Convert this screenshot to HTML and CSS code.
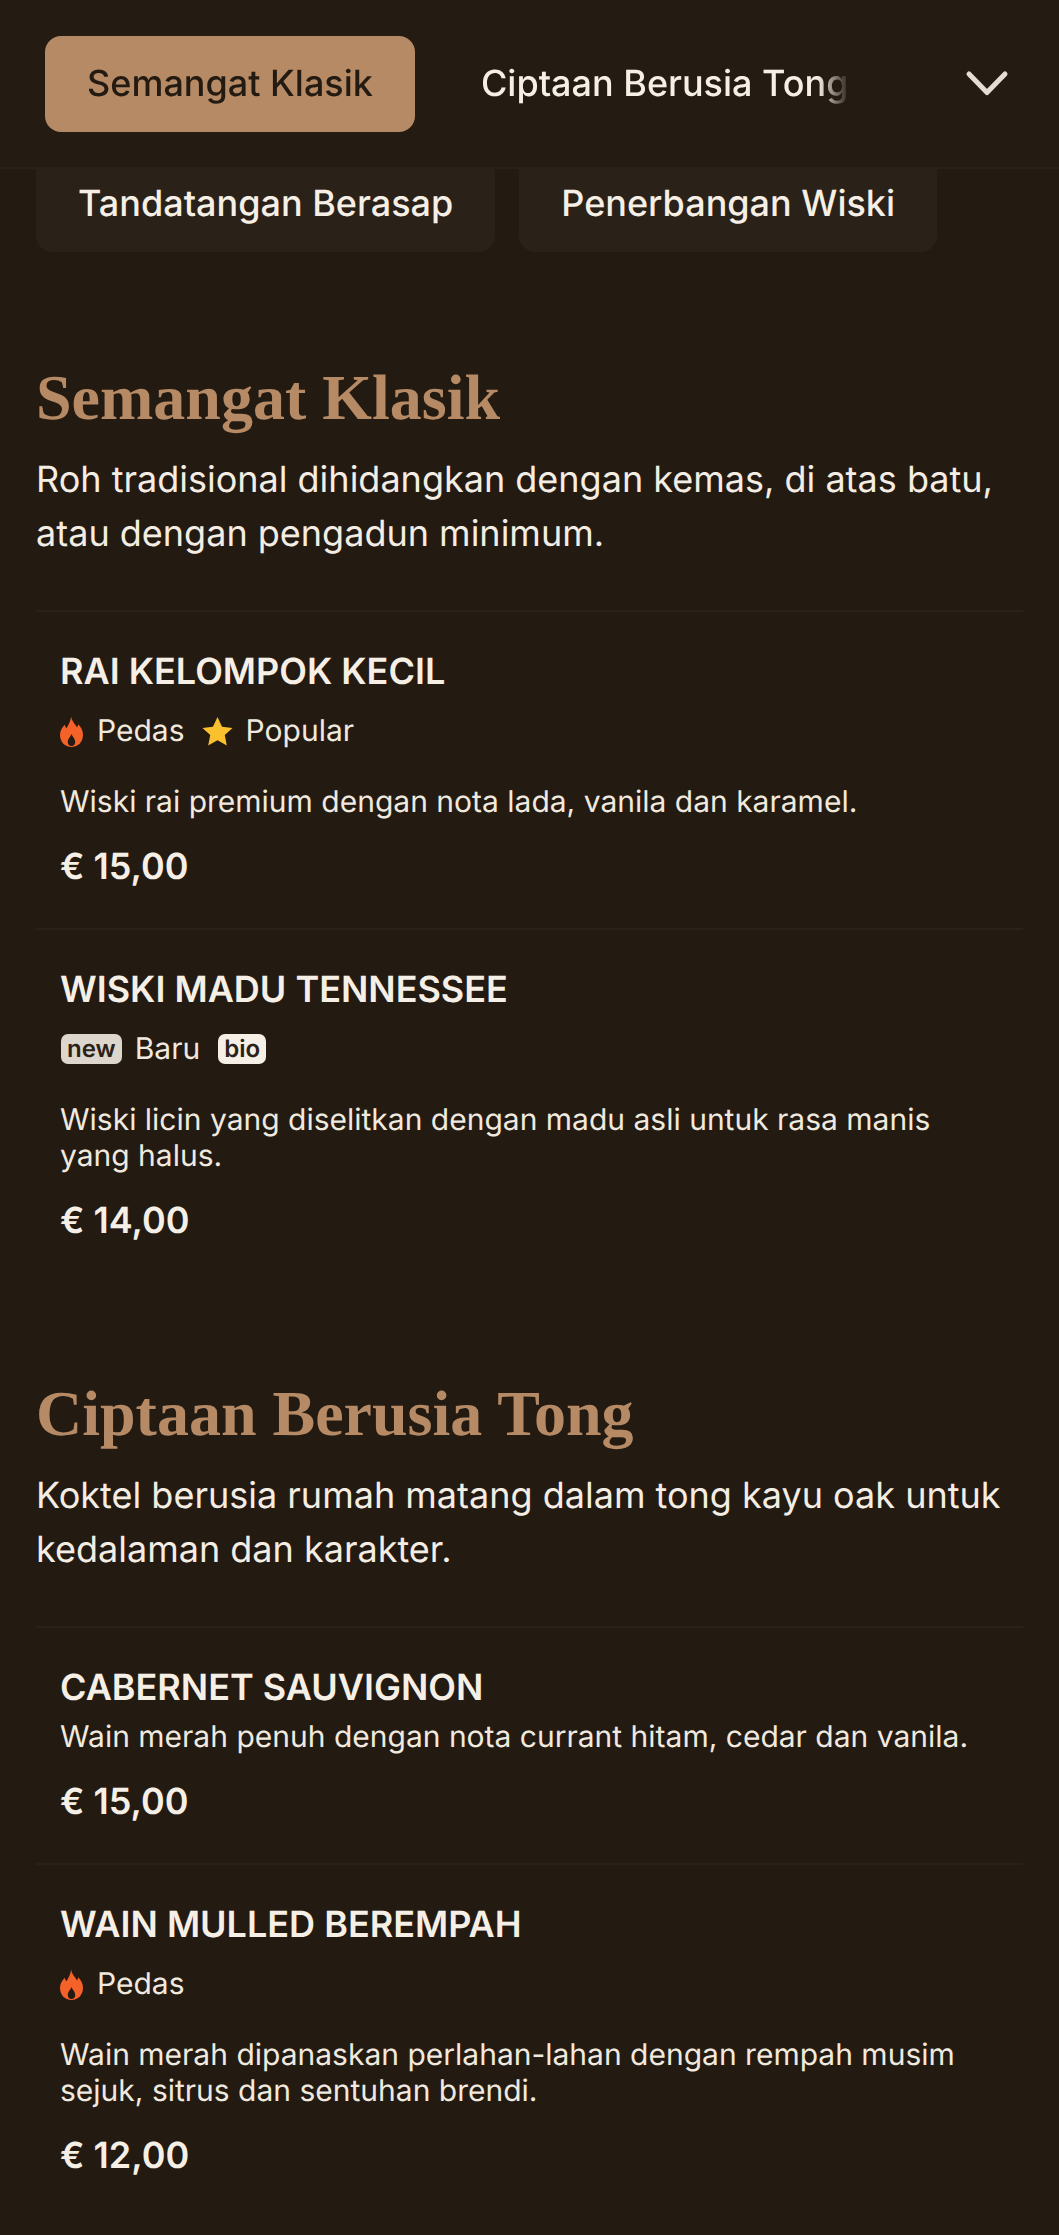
FILE: index.html
```html
<!DOCTYPE html>
<html lang="ms">
<head>
<meta charset="utf-8">
<title>Menu</title>
<link rel="stylesheet" href="styles.css">
</head>
<body>
<svg class="defs" width="0" height="0" aria-hidden="true">
  <symbol id="flame" viewBox="0 0 23 31">
    <path fill="#f4622a" fill-rule="evenodd" d="M11 0C11.500 5 15 7.500 17 11.500C17.700 10.500 18 9.500 18.200 8.200C21 11 23 14.500 23 19C23 26 18 31 11.500 31C5 31 0 26 0 19C0 14.500 2.500 11 4.700 8.700C5 10 5.600 11.200 6.500 12.300C8.500 8.500 11 5 11 0ZM11.500 18C10.500 21 7.800 22.500 7.800 26.300C7.800 28.500 9.400 30 11.500 30C13.600 30 15.200 28.500 15.200 26.300C15.200 22.500 12.500 21 11.500 18Z"/>
  </symbol>
  <symbol id="star" viewBox="0 0 32 30">
    <path fill="#fbc02d" d="M16 0.500l4.700 10 10.800 1.300-8 7.400 2.100 10.700L16 24.600 6.400 29.900l2.100-10.700-8-7.400 10.800-1.300z"/>
  </symbol>
</svg>

<nav class="topnav">
  <div class="tabs">
    <a class="tab tab-active">Semangat Klasik</a>
    <a class="tab">Ciptaan Berusia Tong</a>
  </div>
  <button class="chevron" aria-label="Lagi">
    <svg width="44" height="30" viewBox="0 0 44 30"><path d="M4 6L22 24.500L40 6" fill="none" stroke="#e4ddd3" stroke-width="5" stroke-linecap="round" stroke-linejoin="round"/></svg>
  </button>
</nav>

<div class="pills">
  <a class="pill pill-smoke">Tandatangan Berasap</a>
  <a class="pill pill-flight">Penerbangan Wiski</a>
</div>

<main>
  <section class="section">
    <h2>Semangat Klasik</h2>
    <p class="intro">Roh tradisional dihidangkan dengan kemas, di atas batu, atau dengan pengadun minimum.</p>
    <article class="item">
      <h3>RAI KELOMPOK KECIL</h3>
      <div class="tags">
        <span class="tag"><svg class="ico-flame"><use href="#flame"/></svg>Pedas</span>
        <span class="tag"><svg class="ico-star"><use href="#star"/></svg>Popular</span>
      </div>
      <p class="desc">Wiski rai premium dengan nota lada, vanila dan karamel.</p>
      <div class="price">€ 15,00</div>
    </article>
    <article class="item">
      <h3>WISKI MADU TENNESSEE</h3>
      <div class="tags">
        <span class="tag"><span class="badge badge-new">new</span>Baru</span>
        <span class="tag"><span class="badge badge-bio">bio</span></span>
      </div>
      <p class="desc">Wiski licin yang diselitkan dengan madu asli untuk rasa manis yang halus.</p>
      <div class="price">€ 14,00</div>
    </article>
  </section>

  <section class="section">
    <h2>Ciptaan Berusia Tong</h2>
    <p class="intro">Koktel berusia rumah matang dalam tong kayu oak untuk kedalaman dan karakter.</p>
    <article class="item">
      <h3>CABERNET SAUVIGNON</h3>
      <p class="desc desc-tight">Wain merah penuh dengan nota currant hitam, cedar dan vanila.</p>
      <div class="price">€ 15,00</div>
    </article>
    <article class="item">
      <h3>WAIN MULLED BEREMPAH</h3>
      <div class="tags">
        <span class="tag"><svg class="ico-flame"><use href="#flame"/></svg>Pedas</span>
      </div>
      <p class="desc">Wain merah dipanaskan perlahan-lahan dengan rempah musim sejuk, sitrus dan sentuhan brendi.</p>
      <div class="price">€ 12,00</div>
    </article>
  </section>
</main>
</body>
</html>
```
FILE: styles.css
```css
* { box-sizing: border-box; }
html, body { margin: 0; padding: 0; }
body {
  background: #231a12;
  color: #f5efe6;
  font-family: Inter, "Liberation Sans", sans-serif;
  text-rendering: geometricPrecision;
  height: 2235px;
  overflow: hidden;
}
.defs { position: absolute; }

.topnav {
  position: relative;
  z-index: 2;
  height: 169px;
  display: flex;
  align-items: flex-start;
  background: #241b13;
  border-bottom: 2px solid #2a2118;
}
.tabs {
  display: flex;
  gap: 24px;
  margin: 36px 0 0 45px;
  width: 805px;
  overflow: hidden;
  -webkit-mask-image: linear-gradient(to right, #000 96%, transparent);
  mask-image: linear-gradient(to right, #000 96%, transparent);
}
.tab {
  flex: none;
  height: 96px;
  padding: 0 42px 2px;
  border-radius: 16px;
  display: flex;
  align-items: center;
  font-size: 36px;
  font-weight: 500;
  white-space: nowrap;
}
.tab-active { background: #b58a65; color: #231a12; }
.chevron {
  margin: 68px 50px 0 auto;
  padding: 0;
  width: 44px;
  height: 30px;
  background: none;
  border: 0;
}

.pills {
  display: flex;
  gap: 24px;
  margin: -13px 0 0 36px;
}
.pill {
  height: 96px;
  padding: 0 42px 2px;
  border-radius: 16px;
  background: #2a2118;
  display: flex;
  align-items: center;
  font-size: 36px;
  font-weight: 500;
  white-space: nowrap;
}

main { padding: 0 36px; }
.section { margin-top: 108px; }
.section + .section { margin-top: 94px; }

h2 {
  margin: 0;
  font-family: "Liberation Serif", serif;
  font-weight: 700;
  font-size: 64px;
  line-height: 76px;
  color: #b58a65;
}
.intro {
  margin: 16px 0 0;
  font-size: 36px;
  line-height: 54px;
  color: #f3ede4;
}
.item {
  border-top: 2px solid #2a2118;
  padding: 39px 24px 40px;
}
.intro + .item { margin-top: 50px; }
h3 {
  margin: 0;
  font-size: 36px;
  font-weight: 600;
  line-height: 40px;
}
.tags {
  display: flex;
  gap: 18px;
  margin-top: 18px;
  height: 44px;
  align-items: center;
}
.tag {
  display: flex;
  align-items: center;
  gap: 14px;
  font-size: 30px;
  color: #f0e9df;
}
.ico-flame { width: 23px; height: 31px; }
.ico-star { width: 31px; height: 30px; margin: 0 -1px 0 -1px; }
.badge {
  height: 30px;
  padding: 0 6px 2px;
  border-radius: 7px;
  display: flex;
  align-items: center;
  font-size: 24px;
  font-weight: 600;
  color: #2a2118;
}
.badge-new { background: #ddd6cc; margin-left: 1px; margin-right: -1px; }
.badge-bio { background: #f5efe6; }
.desc {
  margin: 31px 0 0;
  font-size: 30px;
  line-height: 36px;
  color: #f0e9df;
}
.desc-tight { margin-top: 12px; }
.price {
  margin-top: 24px;
  font-size: 36px;
  font-weight: 600;
  line-height: 44px;
}
```
